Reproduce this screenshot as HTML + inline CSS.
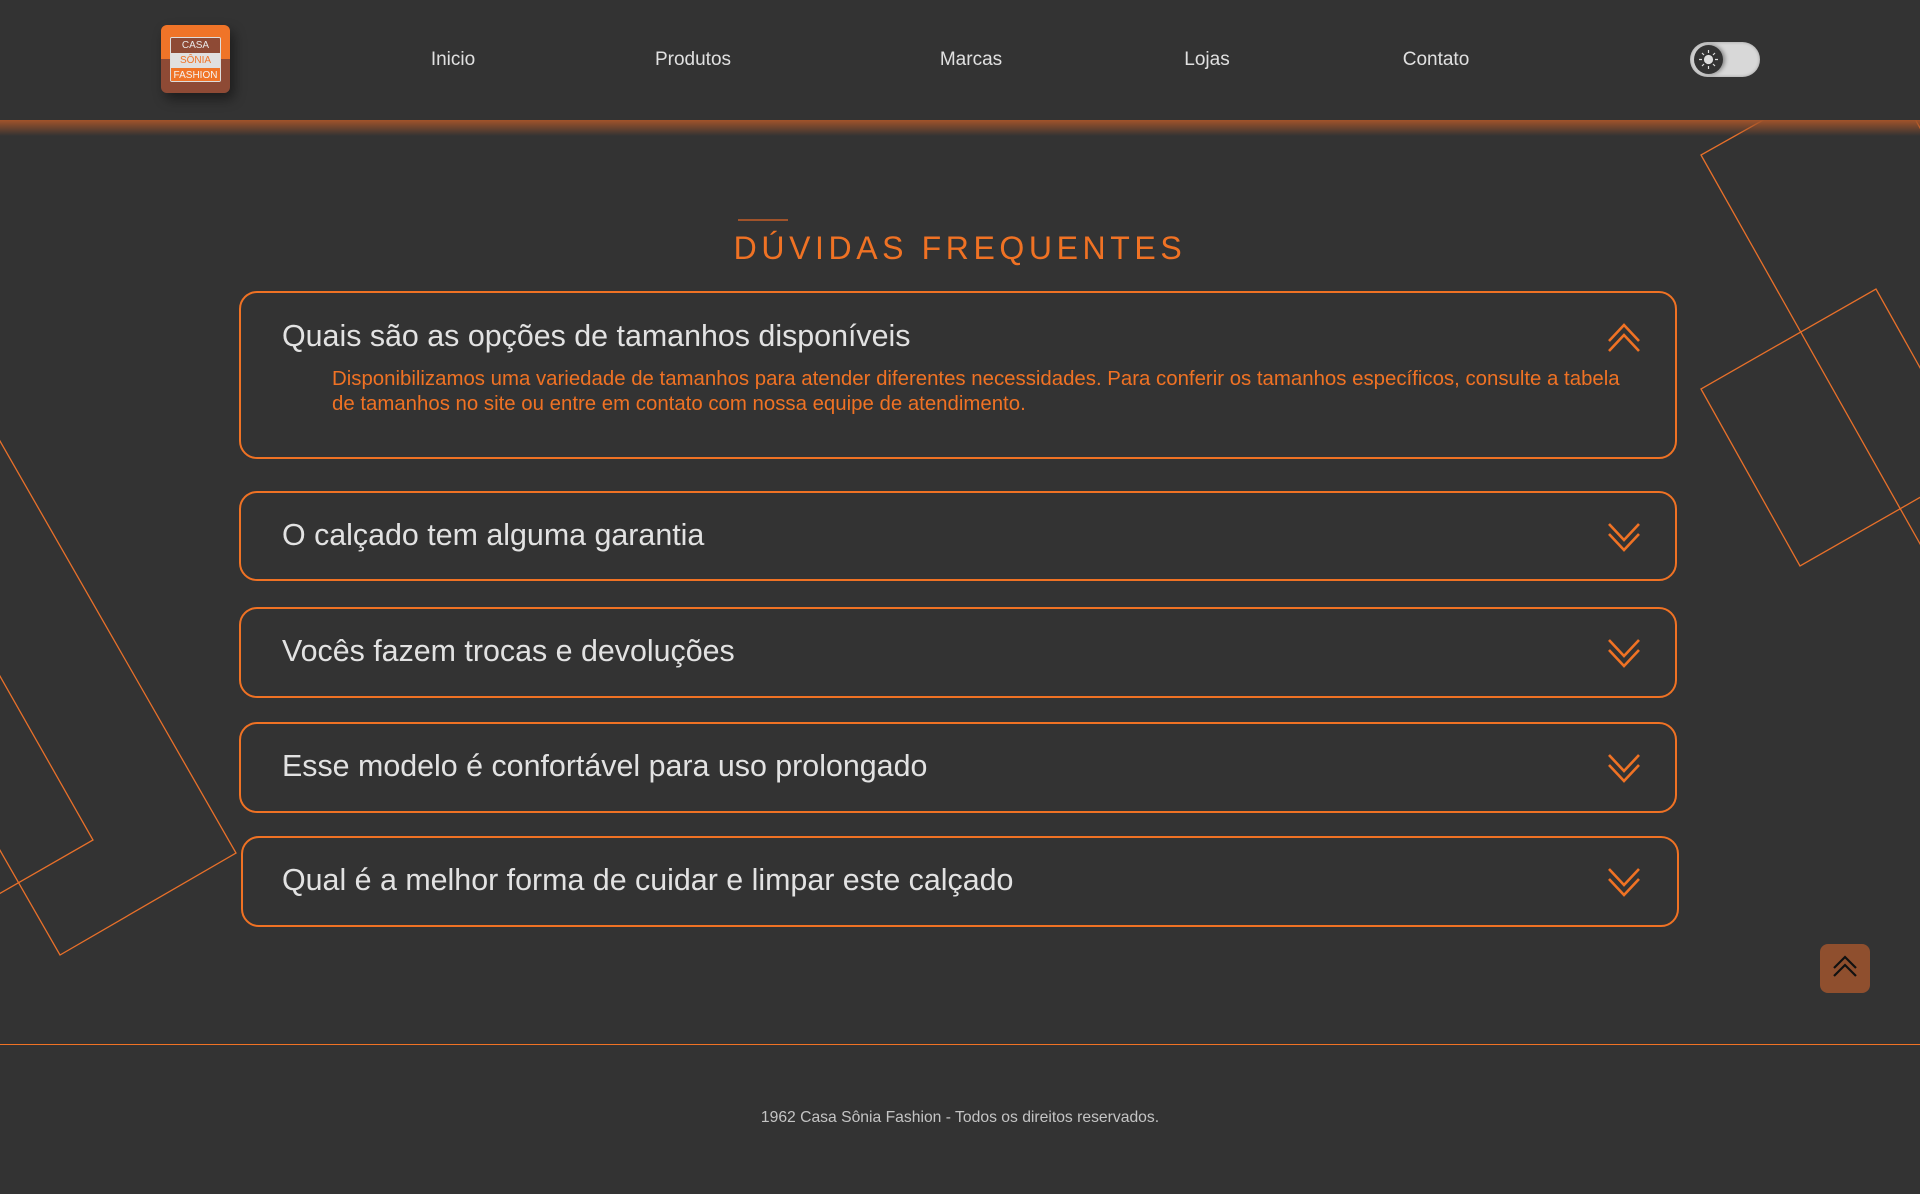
<!DOCTYPE html>
<html><head><meta charset="utf-8"><style>
*{margin:0;padding:0;box-sizing:border-box}
body{width:1920px;height:1194px;background:#333;font-family:"Liberation Sans",sans-serif;position:relative;overflow:hidden}
header{position:absolute;left:0;top:0;width:1920px;height:120px;background:#333;z-index:3}
.glow{position:absolute;left:0;top:120px;width:1920px;height:16px;background:linear-gradient(#a1532a,rgba(51,51,51,0));z-index:3}
.logo{position:absolute;left:161px;top:25px;width:69px;height:68px;border-radius:6px;overflow:hidden;background:linear-gradient(#f07428 50%,#8e4a35 50%);box-shadow:4px 6px 12px rgba(0,0,0,.45)}
.inner{position:absolute;left:9px;top:12px;width:51px;height:45px;border:1px solid #ddd;border-radius:2px;overflow:hidden;font-size:10px;text-align:center;line-height:15px}
.inner div:nth-child(1){background:#8e4a35;color:#e8e8e8}
.inner div:nth-child(2){background:#e0e0e0;color:#f07428}
.inner div:nth-child(3){background:#f07428;color:#f3f3f3}
nav a{position:absolute;top:49px;color:#e0e0e0;font-size:19px;transform:translateX(-50%);text-decoration:none}
.tog{position:absolute;left:1690px;top:42px;width:70px;height:35px;border-radius:18px;background:#d8d8d8;box-shadow:inset 0 0 3px rgba(0,0,0,.3)}
.knob{position:absolute;left:4px;top:3px;width:29px;height:29px;border-radius:50%;background:#333;box-shadow:2px 0 4px rgba(0,0,0,.4)}
.tline{position:absolute;left:738px;top:219px;width:50px;height:2px;background:#a1532a}
h1{position:absolute;left:0;width:1920px;top:230px;text-align:center;font-weight:normal;color:#f07224;font-size:32px;letter-spacing:4.6px}
.faq{position:absolute;left:239px;width:1438px;border:2px solid #f07224;border-radius:18px}
.q{position:absolute;left:41px;color:#e2e2e2;font-size:30.4px}
.a{position:absolute;left:91px;top:74px;width:1315px;color:#f07224;font-size:20.4px;line-height:25px}
.faq svg{position:absolute;left:1366px}
.top{position:absolute;left:1820px;top:944px;width:50px;height:49px;border-radius:8px;background:#8f4f2e}
.fl{position:absolute;left:0;top:1044px;width:1920px;height:1px;background:#f07224}
.ft{position:absolute;top:1109px;width:1920px;text-align:center;color:#c4c4c4;font-size:15.7px}
</style></head><body>
<svg style="position:absolute;left:0;top:0" width="1920" height="1194" fill="none" stroke="#e8702a" stroke-width="1.3">
<polygon points="1701,155 1995,677 2173,577 1879,55"/>
<polygon points="1701,389 1800,566 1975,466 1876,289"/>
<polygon points="-200,92 236,853 60,955 -376,194"/>
<polygon points="-100,500 93,840 -90,945 -283,605"/>
</svg>
<header>
<div class="logo"><div class="inner"><div>CASA</div><div>SÔNIA</div><div>FASHION</div></div></div>
<nav><a style="left:453px">Inicio</a><a style="left:693px">Produtos</a><a style="left:971px">Marcas</a><a style="left:1207px">Lojas</a><a style="left:1436px">Contato</a></nav>
<div class="tog"><div class="knob"><svg width="29" height="29" viewBox="0 0 29 29" stroke="#ddd" stroke-width="1.2"><circle cx="14.5" cy="14.5" r="4" fill="#ddd"/><path d="M14.5 5v3M14.5 21v3M5 14.5h3M21 14.5h3M8 8l2 2M19 19l2 2M8 21l2-2M19 10l2-2"/></svg></div></div>
</header>
<div class="glow"></div>
<div class="tline"></div>
<h1>DÚVIDAS FREQUENTES</h1>
<div class="faq" style="top:291px;height:168px"><div class="q" style="top:26px">Quais são as opções de tamanhos disponíveis</div>
<div class="a">Disponibilizamos uma variedade de tamanhos para atender diferentes necessidades. Para conferir os tamanhos específicos, consulte a tabela de tamanhos no site ou entre em contato com nossa equipe de atendimento.</div>
<svg style="top:29px" width="34" height="32" fill="none" stroke="#f07224" stroke-width="2.6"><path d="M2 19L17 3L32 19M2 29L17 13L32 29"/></svg></div>
<div class="faq" style="top:491px;height:90px"><div class="q" style="top:25px">O calçado tem alguma garantia</div><svg style="top:28px" width="34" height="32" fill="none" stroke="#f07224" stroke-width="2.6"><path d="M2 3L17 19L32 3M2 13L17 29L32 13"/></svg></div>
<div class="faq" style="top:607px;height:91px"><div class="q" style="top:25px">Vocês fazem trocas e devoluções</div><svg style="top:28px" width="34" height="32" fill="none" stroke="#f07224" stroke-width="2.6"><path d="M2 3L17 19L32 3M2 13L17 29L32 13"/></svg></div>
<div class="faq" style="top:722px;height:91px"><div class="q" style="top:25px">Esse modelo é confortável para uso prolongado</div><svg style="top:28px" width="34" height="32" fill="none" stroke="#f07224" stroke-width="2.6"><path d="M2 3L17 19L32 3M2 13L17 29L32 13"/></svg></div>
<div class="faq" style="top:836px;height:91px;left:241px"><div class="q" style="top:25px;left:39px">Qual é a melhor forma de cuidar e limpar este calçado</div><svg style="top:28px;left:1364px" width="34" height="32" fill="none" stroke="#f07224" stroke-width="2.6"><path d="M2 3L17 19L32 3M2 13L17 29L32 13"/></svg></div>
<div class="top"><svg width="50" height="49" fill="none" stroke="#111" stroke-width="2.2"><path d="M14 24L25 13L36 24M14 32L25 21L36 32"/></svg></div>
<div class="fl"></div>
<div class="ft">1962 Casa Sônia Fashion - Todos os direitos reservados.</div>
</body></html>
